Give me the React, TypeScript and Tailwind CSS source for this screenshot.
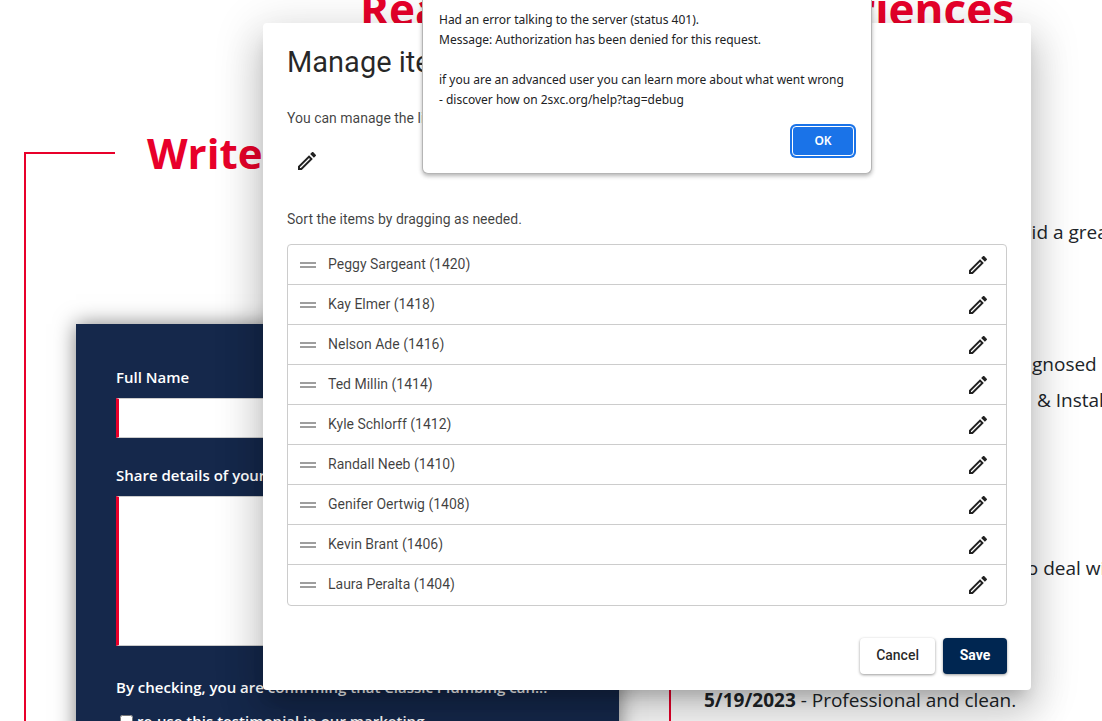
import { MdDragHandle, MdOutlineEdit } from 'react-icons/md';

interface Item {
  id: number;
  name: string;
}

const items: Item[] = [
  { id: 1420, name: 'Peggy Sargeant' },
  { id: 1418, name: 'Kay Elmer' },
  { id: 1416, name: 'Nelson Ade' },
  { id: 1414, name: 'Ted Millin' },
  { id: 1412, name: 'Kyle Schlorff' },
  { id: 1410, name: 'Randall Neeb' },
  { id: 1408, name: 'Genifer Oertwig' },
  { id: 1406, name: 'Kevin Brant' },
  { id: 1404, name: 'Laura Peralta' },
];

function ReviewForm() {
  return (
    <fieldset className="w-[647px] shrink-0 border-2 border-[#e8002a] px-[50px] pb-12">
      <legend className="ml-[39px] px-8 text-[42px] leading-[60px] font-bold whitespace-nowrap text-[#e8002a]">
        Write a Review
      </legend>
      <form className="mt-[141px] bg-[#15284b] p-10 font-semibold text-white shadow-[0_0_20px_rgba(0,0,0,0.5)]">
        <label htmlFor="full-name" className="block text-[15px] leading-[26px]">Full Name</label>
        <input
          id="full-name"
          type="text"
          className="mt-2 block h-10 w-full border border-l-[3px] border-[#ccc] border-l-[#e8002a] bg-white px-3 text-gray-900"
        />
        <label htmlFor="details" className="mt-6 block text-[15px] leading-[26px]">
          Share details of your experience
        </label>
        <textarea
          id="details"
          className="mt-2 block h-[150px] w-full resize-none border border-l-[3px] border-[#ccc] border-l-[#e8002a] bg-white px-3 text-gray-900"
        />
        <p className="mt-7 text-[15px] leading-[26px]">
          By checking, you are confirming that Classic Plumbing can...
        </p>
        <label className="mt-2 flex items-center gap-1 pl-1 text-[15px] leading-[26px]">
          <input type="checkbox" className="size-[13px]" />
          re-use this testimonial in our marketing
        </label>
      </form>
    </fieldset>
  );
}

function Reviews() {
  return (
    <div className="ml-[33px] shrink-0 pt-[91px] text-[19px] leading-9 whitespace-nowrap text-[#212529]">
      <p className="pl-[316px]">did a great job</p>
      <p className="mt-24 pl-[328px]">gnosed</p>
      <p className="pl-[333px]">&amp; Installed</p>
      <p className="mt-[132px] pl-[316px]">to deal with</p>
      <p className="mt-24">
        <strong>5/19/2023</strong> - Professional and clean.
      </p>
    </div>
  );
}

function ManageDialog() {
  return (
    <div
      role="dialog"
      aria-labelledby="manage-title"
      className="w-full max-w-3xl rounded bg-white px-6 pb-4 font-[Roboto,sans-serif] text-sm text-black/75 shadow-[0_11px_15px_-7px_rgba(0,0,0,0.2),0_24px_38px_3px_rgba(0,0,0,0.14),0_9px_46px_8px_rgba(0,0,0,0.12)]"
    >
      <h2 id="manage-title" className="pt-5 text-[29px] leading-[38px] text-black/85">Manage items</h2>
      <p className="mt-[27px] leading-5">You can manage the list of items here.</p>
      <button type="button" aria-label="Edit header" className="mt-[13px] flex size-10 items-center justify-center text-[#212121]">
        <MdOutlineEdit size={24} />
      </button>
      <p className="mt-7 leading-5">Sort the items by dragging as needed.</p>

      <ul className="mt-[15px] divide-y divide-[#ccc] rounded border border-[#ccc]">
        {items.map((item) => (
          <li key={item.id} className="flex h-10 items-center pr-4 pl-2">
            <MdDragHandle size={24} className="text-[#9e9e9e]" />
            <span className="ml-2 flex-1 pb-0.5">
              {item.name} ({item.id})
            </span>
            <button type="button" aria-label={`Edit ${item.name}`} className="text-[#212121]">
              <MdOutlineEdit size={24} />
            </button>
          </li>
        ))}
      </ul>

      <div className="mt-8 flex justify-end gap-2 font-medium">
        <button type="button" className="h-9 rounded bg-white px-4 pb-0.5 text-black/85 shadow-[0_1px_3px_rgba(0,0,0,0.4)]">
          Cancel
        </button>
        <button type="button" className="h-9 min-w-16 rounded bg-[#002651] px-4 pb-0.5 font-bold text-white shadow-[0_1px_3px_rgba(0,0,0,0.4)]">
          Save
        </button>
      </div>
    </div>
  );
}

function ErrorAlert() {
  return (
    <div
      role="alertdialog"
      aria-label="Server error"
      className="w-full max-w-[450px] rounded-b-md border border-t-0 border-[#b5b5b5] bg-white p-4 pt-[10px] font-['Noto_Sans',sans-serif] text-xs leading-5 text-[#202124] shadow-[0_2px_4px_rgba(0,0,0,0.3)]"
    >
      <p>Had an error talking to the server (status 401).</p>
      <p>Message: Authorization has been denied for this request.</p>
      <p className="mt-5">
        if you are an advanced user you can learn more about what went wrong
        <br />- discover how on 2sxc.org/help?tag=debug
      </p>
      <div className="mt-4 flex justify-end pr-px pb-px">
        <button
          type="button"
          className="h-[30px] w-[62px] rounded-sm border border-white bg-[#1a73e8] text-xs font-semibold text-white ring-2 ring-[#1a73e8]"
        >
          OK
        </button>
      </div>
    </div>
  );
}

export default function App() {
  return (
    <div className="relative h-screen overflow-hidden bg-white font-['Open_Sans','Noto_Sans',sans-serif]">
      <h1 className="ml-[360px] flex w-[654px] justify-between text-[44px] leading-[18px] font-bold text-[#e8002a]">
        <span>Real</span>
        <span>Experiences</span>
      </h1>
      <div className="mt-[105px] flex items-start pl-6">
        <ReviewForm />
        <Reviews />
      </div>

      {/* item manager */}
      <div className="absolute inset-0 flex items-start justify-center pt-[23px] pl-48">
        <ManageDialog />
      </div>

      {/* browser alert on top of everything */}
      <div className="absolute inset-x-0 top-0 flex justify-center pl-48">
        <ErrorAlert />
      </div>
    </div>
  );
}
